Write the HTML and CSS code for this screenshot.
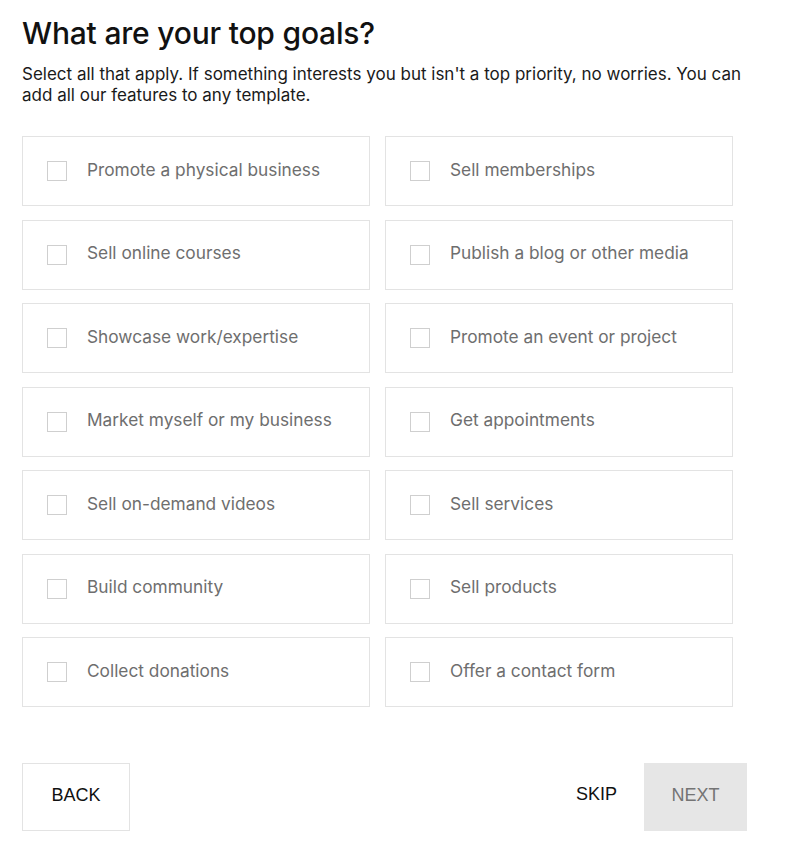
FILE: index.html
```html
<!DOCTYPE html>
<html lang="en">
<head>
    <meta charset="UTF-8">
    <meta name="viewport" content="width=device-width, initial-scale=1.0">
    <title>Your top goals</title>
    <link rel="stylesheet" href="styles.css">
</head>
<body>
<div class="page">
    <h1>What are your top goals?</h1>
    <p class="lead">Select all that apply. If something interests you but isn't a top priority, no worries. You can add all our features to any template.</p>

    <div class="goals">
        <label class="goal"><span class="box"></span>Promote a physical business</label>
        <label class="goal"><span class="box"></span>Sell memberships</label>
        <label class="goal"><span class="box"></span>Sell online courses</label>
        <label class="goal"><span class="box"></span>Publish a blog or other media</label>
        <label class="goal"><span class="box"></span>Showcase work/expertise</label>
        <label class="goal"><span class="box"></span>Promote an event or project</label>
        <label class="goal"><span class="box"></span>Market myself or my business</label>
        <label class="goal"><span class="box"></span>Get appointments</label>
        <label class="goal"><span class="box"></span>Sell on-demand videos</label>
        <label class="goal"><span class="box"></span>Sell services</label>
        <label class="goal"><span class="box"></span>Build community</label>
        <label class="goal"><span class="box"></span>Sell products</label>
        <label class="goal"><span class="box"></span>Collect donations</label>
        <label class="goal"><span class="box"></span>Offer a contact form</label>
    </div>

    <div class="actions">
        <button class="btn back">BACK</button>
        <div class="right">
            <button class="btn skip">SKIP</button>
            <button class="btn next">NEXT</button>
        </div>
    </div>
</div>
</body>
</html>
```

FILE: styles.css
```css
body { margin: 0; background: #fff; font-family: Inter, "Noto Sans", sans-serif; color: #111; }
.page { width: 725px; padding: 17px 0 0 22px; }

h1 {
    margin: 0;
    font-size: 30px;
    font-weight: 500;
    letter-spacing: -0.2px;
    line-height: 32px;
}
.lead {
    margin: 15px 0 0;
    font-size: 17px;
    line-height: 21px;
    color: #1a1a1a;
}

.goals {
    width: 711px;
    margin-top: 30px;
    display: grid;
    grid-template-columns: 348px 348px;
    column-gap: 15px;
    row-gap: 13.5px;
}
.goal {
    height: 70px;
    box-sizing: border-box;
    border: 1px solid #e3e3e3;
    display: flex;
    align-items: center;
    padding: 0 0 4px 24px;
    font-size: 17.3px;
    color: #6e6e6e;
}
.box {
    width: 20px;
    height: 20px;
    box-sizing: border-box;
    border: 1px solid #cfcfcf;
    margin: 4px 20px 0 0;
    flex: none;
}

.actions {
    margin-top: 56px;
    display: flex;
    justify-content: space-between;
    align-items: center;
}
.right { display: flex; align-items: center; }
.btn {
    font-family: "Liberation Sans", Arial, sans-serif;
    font-size: 18px;
    height: 68px;
    border: none;
    background: none;
    padding: 0 0 4px;
    color: #111;
}
.back { width: 108px; border: 1px solid #e3e3e3; }
.skip { height: auto; padding: 0; margin: 0 27px 6px 0; }
.next { width: 103px; background: #e6e6e6; color: #747474; }
```
